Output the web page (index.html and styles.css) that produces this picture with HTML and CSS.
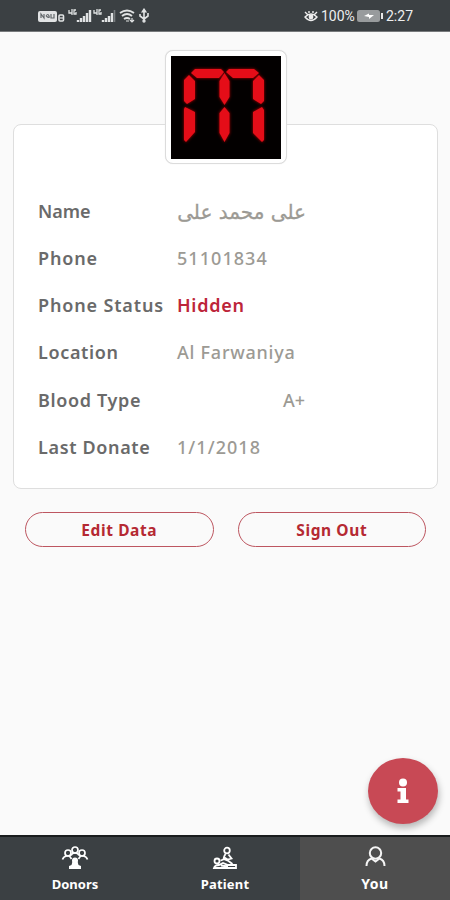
FILE: index.html
```html
<!DOCTYPE html>
<html lang="en">
<head>
<meta charset="utf-8">
<title>Profile</title>
<link rel="stylesheet" href="styles.css">
</head>
<body>
<div class="app">
  <header class="status">
    <div class="status-left">
      <svg width="112" height="16" viewBox="0 0 112 16" fill="none" stroke="#e1e3e4" stroke-width="1.2">
        <rect x="0" y="3" width="19" height="11" rx="2" fill="#e1e3e4" stroke="none"/>
        <path d="M3 10V6l3 4V6M8 8q2-3 3 0t-3 0M13 6v4h3V6" stroke="#62676a"/>
        <rect x="21" y="7" width="4.500" height="6" rx="1" stroke-width="1.600"/><path d="M22 10h3"/>
        <path d="M31 2v3h3M34 1v6M38 2h-2v4h2V4" stroke-width="1.300"/>
        <path d="M40 14v-2M43 14v-4M46 14V8M49 14V5M52 14V2" stroke-width="2.400"/>
        <path d="M56 2v3h3M59 1v6M63 2h-2v4h2V4" stroke-width="1.300"/>
        <path d="M65 14v-2M68 14v-4M71 14V8M74 14V5" stroke-width="2.400"/><path d="M76.500 14V2" stroke="#777b7e" stroke-width="1.600"/>
        <path d="M82 5q7-5 14 0M84 8q5-4 10 0M86 11q3-2 6 0" stroke-width="1.900"/><path d="M88 13h3M94 10v4M92 12l2 2 2-2"/>
        <path d="M106 2v11M102 6v2l4 3M110 5v3l-4 3" stroke-width="1.600"/><path d="M104 4l2-3 2 3z" fill="#e1e3e4"/><circle cx="106" cy="13" r="1.100" fill="#e1e3e4"/>
      </svg>
    </div>
    <div class="status-right">
      <svg width="14" height="12" viewBox="0 0 14 12" fill="none" stroke="#eee" stroke-width="1.400"><path d="M1 7q6-6 12 0-6 7-12 0zM1 2l2.500 2.500M5 1v2M9 1v2M13 2l-2.500 2.500"/><circle cx="7" cy="7" r="1.700" fill="#eee"/></svg>
      <span class="percent">100%</span>
      <svg class="battery" width="26" height="12" viewBox="0 0 26 12"><rect width="23" height="12" rx="2.500" fill="#989b9d"/><path d="M24 3h2v6h-2z" fill="#e7e7e7"/><path d="M7 6l5-2.500V5h5l-5 4V7z" fill="#fff"/></svg>
      <span class="clock">2:27</span>
    </div>
  </header>
  <main>
    <section class="card">
      <div class="avatar">
        <svg width="110" height="103" viewBox="0 0 110 103">
          <defs><filter id="glow" x="-20%" y="-20%" width="140%" height="140%"><feGaussianBlur stdDeviation="1.800"/></filter>
          <g id="segments"><path d="M20 17l4-4h26l3 3-5 6H26zM55 16l3-3h25l5 4-6 5H62zM18 19l6 6v18l-8 5-3-3V24zM53.500 17l5 8v16l-5 8-5-8V25zM88 19l5 5v21l-3 3-8-5V25zM14 51l10 5v20l-9 10-2-2V53zM53.500 51l5 6v20l-5 9-5-9V57zM91 51l2 3v30l-2 2-9-9V56z"/></g></defs>
          <rect width="110" height="103" fill="#030000"/>
          <use href="#segments" fill="#b90009" filter="url(#glow)"/><use href="#segments" fill="#e50d18"/>
        </svg>
      </div>
      <dl class="details">
        <dt class="t-name">Name</dt><dd class="v-name" dir="rtl" lang="ar">على محمد على</dd>
        <dt class="t-phone">Phone</dt><dd class="v-phone">51101834</dd>
        <dt class="t-status">Phone Status</dt><dd class="v-status">Hidden</dd>
        <dt>Location</dt><dd>Al Farwaniya</dd>
        <dt>Blood Type</dt><dd class="v-blood">A+</dd>
        <dt>Last Donate</dt><dd class="v-last">1/1/2018</dd>
      </dl>
    </section>
    <div class="actions"><button>Edit Data</button><button>Sign Out</button></div>
  </main>
  <button class="info" aria-label="Information"><svg width="12" height="26" viewBox="0 0 12 26" fill="#fff"><circle cx="6" cy="4.500" r="4"/><path d="M.500 10H9v11.500h2.500V25H.500v-3.500h3v-8h-3z"/></svg></button>
  <nav>
    <a class="tab"><svg width="28" height="26" viewBox="0 0 28 26" fill="none" stroke="#fff" stroke-width="1.700"><circle cx="14" cy="4" r="3"/><circle cx="7" cy="7" r="3"/><circle cx="21" cy="7" r="3"/><path d="M1.500 13.500q1-3 4-3.500h3l2 3M26.500 13.500q-1-3-4-3.500h-3l-2 3M10 9.500q1-2.500 4-2.500t4 2.500"/><circle cx="14" cy="14.500" r="3" fill="#fff" stroke="none"/><path d="M11.500 15.500h5l1 3.500 2.500 1v3H8v-3l2.500-1z" fill="#fff" stroke="none"/></svg><span>Donors</span></a>
    <a class="tab"><svg width="28" height="26" viewBox="0 0 28 26" fill="none" stroke="#fff" stroke-width="1.800"><circle cx="16" cy="4.500" r="2.800"/><path d="M14.500 8q-2 3-2 5l5 2 4 3M17.500 8.500l3 4-4 1-3-2M12.500 13.500l-3 1"/><circle cx="6" cy="15" r="2.500"/><path d="M3 22q1-3 5-3l4-2 5 2h8v3zM10 19.500l7 1"/></svg><span class="patient">Patient</span></a>
    <a class="tab active"><svg width="28" height="26" viewBox="0 0 28 26" fill="none" stroke="#f5f5f5" stroke-width="2"><circle cx="14.500" cy="7" r="5.700"/><path d="M5.500 20q0-6 5-7.500l4 3 4-3q5 1.500 5 7.500"/></svg><span class="you">You</span></a>
  </nav>
</div>
</body>
</html>
```
FILE: styles.css
```css
* { box-sizing: border-box; }
body { margin: 0; font-family: "Noto Sans", "DejaVu Sans", sans-serif; }
.app { width: 450px; height: 900px; display: flex; flex-direction: column; background: #fafafa; position: relative; overflow: hidden; }
.status { height: 32px; flex: none; background: #3b4043; border-bottom: 1px solid #777a7c; display: flex; justify-content: space-between; padding: 0 36px 0 38px; }
.status-left { padding-top: 8px; }
.status-left svg { display: block; }
.status-right { display: flex; align-items: center; color: #eee; font: 14px/32px Roboto, sans-serif; padding-top: 1px; }
.percent { margin-left: 3px; width: 34px; }
.battery { margin: 0 3px 0 2px; }
.clock { width: 28px; }
main { flex: 1; padding: 92px 12px 0 13px; }
.card { height: 365px; border: 1px solid #dedede; border-radius: 8px; background: #fff; position: relative; padding: 62.500px 24px 0; }
.avatar { position: absolute; left: 151px; top: -75px; width: 122px; height: 114px; border: 1px solid #dcdcdc; border-radius: 8px; background: #fff; padding: 5px; box-shadow: 0 0 1px #ddd; }
.avatar svg { display: block; }
.details { margin: 0; display: grid; grid-template-columns: 138px 130px; grid-auto-rows: 47.300px; font-size: 18px; line-height: 47px; white-space: nowrap; }
dt { color: #6a6a6a; font-weight: 600; letter-spacing: .65px; }
dd { margin: 0; color: #9c9a94; font-weight: 500; letter-spacing: .750px; padding-left: 1px; }
.t-name { letter-spacing: 0; }
.t-phone, .t-status { letter-spacing: .850px; }
.v-phone, .v-last { letter-spacing: 1.050px; }
.v-name { font-family: "DejaVu Sans", sans-serif; font-size: 20px; letter-spacing: 0; line-height: 48px; -webkit-text-stroke: .3px #9c9a94; }
.v-status { color: #bd2539; font-weight: 600; }
.v-blood { padding-left: 107px; letter-spacing: 0; }
.actions { display: flex; gap: 24px; padding: 23px 0 0 12px; }
.actions button { width: 188.500px; height: 35px; border: 1px solid #bd5660; border-radius: 18px; background: #fafafa; color: #b52932; font: 700 15.500px/33px "Noto Sans", sans-serif; letter-spacing: .6px; padding: 1px 0 0; }
.info { position: absolute; left: 368px; top: 758px; width: 70px; height: 66px; border: 0; border-radius: 50%; background: #c84955; display: grid; place-items: center; box-shadow: 1px 4px 7px rgb(0 0 0 / 28%); padding: 0; }
nav { height: 65px; border-top: 2px solid #191c1d; display: flex; background: #3b4043; }
.tab { flex: 1; display: flex; flex-direction: column; align-items: center; padding-top: 9px; color: #fff; font-size: 13px; line-height: 24px; font-weight: 700; }
.tab svg { display: block; }
.patient { letter-spacing: .2px; }
.you { font-size: 14px; letter-spacing: .5px; }
.active { background: #4e4e4e; }
```
